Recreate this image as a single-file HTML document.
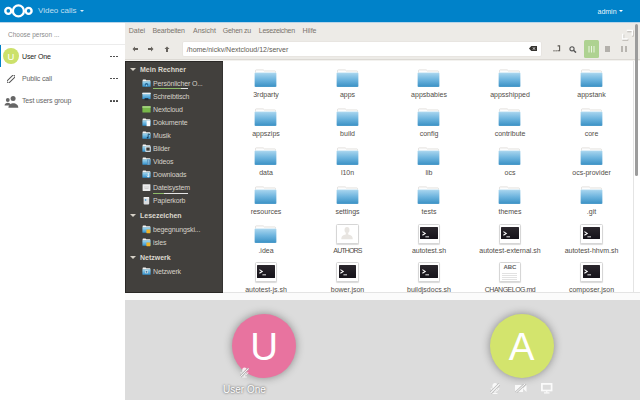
<!DOCTYPE html>
<html><head><meta charset="utf-8">
<style>
*{margin:0;padding:0;box-sizing:border-box}
html,body{width:640px;height:400px;overflow:hidden;background:#fff;font-family:"Liberation Sans",sans-serif}
div,span,svg{position:absolute}
.t{white-space:nowrap}
#hdr{z-index:5;left:0;top:0;width:640px;height:22px;background:#0082c9;border-bottom:1px solid #b8d4e8;height:23px}
.caret{width:0;height:0;border-left:2px solid transparent;border-right:2px solid transparent;border-top:2.5px solid #fff}
#left{left:0;top:21px;width:125px;height:379px;background:#fff}
.nm{left:22px;font-size:7px;color:#555;white-space:nowrap;letter-spacing:-0.15px}
.dots{left:110px;width:8px;height:2px}
.dots i{position:absolute;top:.2px;width:1.7px;height:1.7px;background:#3a3a3a;border-radius:.85px}
#win{left:125px;top:23px;width:515px;height:277px;background:#edebe7}
.menu{top:27px;font-size:7px;color:#7a746d;white-space:nowrap}
#path{left:182.5px;top:41.8px;width:358.5px;height:14px;background:#fff;border-radius:1px;box-shadow:0 0 0 .5px #e3e0db}
#sb{left:125px;top:61px;width:98px;height:232px;background:#42403d;box-shadow:inset 1px 1px 0 #2a2826,inset 0 -1px 0 #2a2826,inset -1px 0 0 #353331}
.sh{left:15px;font-size:7px;font-weight:bold;color:#dcd8ce;white-space:nowrap}
.sh .tri{left:-10.5px;top:2.5px;width:0;height:0;border-left:3px solid transparent;border-right:3px solid transparent;border-top:3.5px solid #d6d1c8}
.si{left:28px;font-size:7px;color:#d6d2c9;white-space:nowrap;letter-spacing:-0.15px}
.si i{position:absolute;left:-11px;top:0px;width:8px;height:7px;background:linear-gradient(180deg,#f2f2f2 0 2px,#3f8fc4 2px,#6fb2de 100%);border-radius:1px}
.ic-desk i{background:linear-gradient(180deg,#f0f0f0 0 1.5px,#6aa8d6 1.5px,#8cc0e6 5px,#223 5px)}
.ic-nc i{background:linear-gradient(180deg,#e8f2e0 0 1.5px,#8dc05a 1.5px,#6ea945 100%)}
.ic-drive i{background:linear-gradient(180deg,#f4f4f4,#cfcfcf)}
.ic-pic i{background:linear-gradient(180deg,#f2f2f2 0 2px,#3f8fc4 2px,#6fb2de 100%);box-shadow:inset -3px -2px 0 #333}
.ic-trash i{left:-10px;width:6px;background:linear-gradient(90deg,#c8ccd0,#f0f0f0,#b8bcc0)}
.ic-bm i{background:linear-gradient(180deg,#f2f2f2 0 2px,#3f8fc4 2px,#6fb2de 100%)}
.ic-bm i::after{content:"";position:absolute;left:4.5px;top:3.5px;width:4px;height:4px;background:#f0b429;border-radius:.5px}
.ic-net i{background:linear-gradient(180deg,#f2f2f2 0 2px,#3f8fc4 2px,#6fb2de 100%)}
.ul{left:28px;width:35px;height:1px;background:linear-gradient(90deg,#8dbb68 80%,#e6e6e6 80%)}
#view{left:223px;top:61px;width:410px;height:231px;background:#fff}
#vsep{left:125px;top:59px;width:515px;height:2px;background:#f3f2ef;border-top:1px solid #dcd9d4}
#scrollline{left:633px;top:61px;width:1px;height:231px;background:#e4e4e4}
#scrollbg{left:634px;top:61px;width:6px;height:231px;background:#fff}
#thumb{left:635px;top:24px;width:3px;height:152px;background:#9c9c9c;border-radius:1.5px}
#wbot{left:223px;top:292px;width:417px;height:8px;background:#fbfbfb;border-top:1px solid #e4e4e4}
#wbot2{left:125px;top:293px;width:98px;height:7px;background:#fbfbfb}
#grey{left:125px;top:300px;width:515px;height:100px;background:#dcdcdc}
.fold{width:23px;height:19px}
.fold i{position:absolute;left:1px;top:0;width:21px;height:5px;background:#fbfbfb;border-top:1px solid #d6d3ce}
.fold b{position:absolute;left:0;top:3px;width:23px;height:15px;background:linear-gradient(180deg,#c2e0f2 0,#8cc4e6 8%,#5aa7d6 55%,#3a8cc0 100%);border-radius:1px 1px 1px 1px;box-shadow:0 .5px 0 #2f7db0}
.doc{width:22.5px;height:20px;background:#fff;border:1px solid #d6d6d6;border-radius:1.5px;box-shadow:0 1px 1px rgba(0,0,0,.15)}
.term{left:1.5px;top:2.2px;width:17.8px;height:12.3px;background:linear-gradient(180deg,#2a262c,#15131a);border-radius:.5px}
.term svg{left:1.6px;top:4.2px}
.pers{left:1px;top:1px;width:18.5px;height:16px;background:#fff}
.pers svg{left:3px;top:0}
.txt{left:0;top:1px;width:20.5px;font-size:6px;color:#666;text-align:center;font-weight:bold}
.ln{left:2.5px;top:9.5px;width:15px;height:8px;background:repeating-linear-gradient(180deg,#e2e2e2 0 1px,transparent 1px 2px)}
.lbl{width:90px;text-align:center;font-size:7px;color:#514d48;white-space:nowrap}
.av{border-radius:50%;color:#fff;text-align:center}
</style></head><body>
<svg width="0" height="0" style="left:0;top:0"><defs>
<linearGradient id="fg" x1="0" y1="0" x2="0" y2="1"><stop offset="0" stop-color="#b4dcf1"/><stop offset=".1" stop-color="#9fd0ec"/><stop offset=".5" stop-color="#6db4de"/><stop offset="1" stop-color="#3990c4"/></linearGradient>
<linearGradient id="sbg" x1="0" y1="0" x2="0" y2="1"><stop offset="0" stop-color="#a9dcf2"/><stop offset="1" stop-color="#2f8fcc"/></linearGradient>
<g id="si-fold"><path d="M0.6 2.5 V1.2 Q0.6 .6 1.2 .6 H3.6 L4.3 1.3 H7.8 Q8.4 1.3 8.4 1.9 V2.5 Z" fill="#f4f4f4"/><rect x=".4" y="2.2" width="8.2" height="5.6" rx=".6" fill="url(#sbg)"/></g>
<g id="si-home"><use href="#si-fold"/><circle cx="4.5" cy="5.5" r="1.6" fill="#1e5f8e"/><rect x="3.8" y="5.6" width="1.4" height="1.6" fill="#8fcbe9"/></g>
<g id="si-desk"><rect x=".4" y=".8" width="8.2" height="6.2" rx=".5" fill="url(#sbg)"/><rect x=".4" y=".8" width="8.2" height="1.3" fill="#f0f0f0"/><rect x="2.6" y="6.2" width="3.8" height="2" fill="#1d2a36"/></g>
<g id="si-nc"><rect x=".4" y="1.2" width="8.2" height="6.4" rx=".5" fill="#78b84a"/><rect x=".4" y="1.2" width="8.2" height="1.6" fill="#a8d884"/></g>
<g id="si-docs"><use href="#si-fold"/><path d="M4.6 2.6 H8.2 V8.2 H4.6 Z" fill="#fafafa"/></g>
<g id="si-music"><use href="#si-fold"/><path d="M6.2 3 V6.4 M6.2 3 L8 3.6" stroke="#173a55" stroke-width=".8" fill="none"/><circle cx="5.6" cy="6.6" r=".9" fill="#173a55"/></g>
<g id="si-pic"><use href="#si-fold"/><rect x="3.4" y="2.6" width="5.2" height="5.2" fill="#eeeeee"/><rect x="4.3" y="3.5" width="3.4" height="3.2" fill="#3a3a36"/></g>
<g id="si-vid"><use href="#si-fold"/><rect x="5" y="2.6" width="3" height="5.2" fill="#3a7fb0"/><path d="M5.5 3.4 H7.5 M5.5 4.6 H7.5 M5.5 5.8 H7.5 M5.5 7 H7.5" stroke="#c8e6f6" stroke-width=".6"/></g>
<g id="si-dl"><use href="#si-fold"/><path d="M6.3 3 V7 M5 5.6 L6.3 7.2 L7.6 5.6" stroke="#f4f4f4" stroke-width=".9" fill="none"/></g>
<g id="si-drive"><rect x=".6" y="1.2" width="7.8" height="6.8" rx=".4" fill="#ececec"/><path d="M2 4 H7 M2.5 5.5 H6.5" stroke="#bdbdbd" stroke-width=".6"/></g>
<g id="si-trash"><rect x="1.6" y="1" width="5.6" height="7.6" rx="1" fill="#d9dcdf"/><rect x="1.6" y="1" width="5.6" height="1.5" rx=".6" fill="#f2f2f2"/><circle cx="3.6" cy="4" r=".8" fill="#2a8bd0"/></g>
<g id="si-bm"><use href="#si-fold"/><rect x="4.4" y="4.4" width="4" height="3.8" rx=".4" fill="#f1b42b"/></g>
<g id="si-net"><use href="#si-fold"/><rect x="3" y="3.6" width="3" height="2.6" fill="#f4f4f4"/><rect x="3.6" y="4.2" width="1.8" height="1.4" fill="#1e5f8e"/></g>
<g id="micoff"><rect x="2.5" y="0" width="5" height="7.4" rx="2.5" fill="#fff"/><path d="M1.1 5 C1.1 9.2 8.9 9.2 8.9 5" fill="none" stroke="#fff" stroke-width="1"/><rect x="4.5" y="8.5" width="1" height="1.6" fill="#fff"/><rect x="2.5" y="10" width="5" height="1" fill="#fff"/><path d="M0.5 10 L9.5 1" stroke="#b8b8b8" stroke-width="2.8"/><path d="M0.5 10 L9.5 1" stroke="#fff" stroke-width="1.1"/></g>
<g id="folder"><path d="M1.6 5 V1.2 Q1.6 0.5 2.3 0.5 H9.6 L10.8 1.6 H21.6 Q22.4 1.6 22.4 2.3 V5 Z" fill="#fdfdfd"/><path d="M1.6 3.5 V1.2 Q1.6 0.5 2.3 0.5 H9.6 L10.8 1.6 H21.6 Q22.4 1.6 22.4 2.3 V3.5" fill="none" stroke="#d2cec8" stroke-width=".6"/><rect x="0.6" y="3.2" width="22.8" height="15.2" rx="1" fill="url(#fg)"/><rect x="0.6" y="3.2" width="22.8" height="15.2" rx="1" fill="none" stroke="#fff" stroke-opacity=".35" stroke-width=".5"/></g>
</defs></svg>
<div id="hdr">
  <svg style="left:0;top:0" width="40" height="21" viewBox="0 0 40 21">
    <circle cx="8.3" cy="10.9" r="3.0" fill="none" stroke="#fff" stroke-width="2.4"/>
    <circle cx="18.4" cy="10.9" r="5.5" fill="none" stroke="#fff" stroke-width="2.3"/>
    <circle cx="28.6" cy="10.9" r="3.0" fill="none" stroke="#fff" stroke-width="2.4"/>
  </svg>
  <div class="t" style="left:38px;top:6px;color:rgba(255,255,255,.75);font-size:8px">Video calls</div>
  <div class="caret" style="left:80.4px;top:10.4px;opacity:.85"></div>
  <div class="t" style="left:597.5px;top:7.5px;color:rgba(255,255,255,.95);font-size:7px">admin</div>
  <div class="caret" style="left:619.3px;top:10.4px"></div>
</div>
<div id="left">
  <div class="t" style="left:8px;top:9.8px;color:#8a8a8a;font-size:6.5px">Choose person ...</div>
  <div style="left:0;top:23px;width:125px;height:1px;background:#ececec"></div>
  <div style="left:0;top:24.3px;width:1.3px;height:21.8px;background:#0082c9"></div>
  <div class="av" style="left:3px;top:27.4px;width:15.8px;height:15.8px;background:#cce16b;font-size:9.5px;line-height:17.6px">U</div>
  <div class="nm" style="top:32px;color:#222">User One</div>
  <div class="dots" style="top:34.6px"><i style="left:0"></i><i style="left:3px"></i><i style="left:6px"></i></div>
  <svg style="left:7px;top:53.5px" width="8" height="8" viewBox="0 0 8 8"><rect x="-1.2" y="2.6" width="10.4" height="2.8" rx="1.4" transform="rotate(-45 4 4)" fill="none" stroke="#555" stroke-width="1"/></svg>
  <div class="nm" style="top:53.5px;color:#666">Public call</div>
  <div class="dots" style="top:56.6px"><i style="left:0"></i><i style="left:3px"></i><i style="left:6px"></i></div>
  <svg style="left:3.5px;top:73.5px" width="15" height="13" viewBox="0 0 15 13"><circle cx="3.8" cy="5" r="1.9" fill="#666"/><path d="M0.6 10.5 C0.6 6.8 7 6.8 7 10.5 Z" fill="#666"/><circle cx="9.1" cy="3.4" r="2.5" fill="#666"/><path d="M4.4 12.8 C4.4 6.8 14.3 6.8 14.3 12.8 Z" fill="#666"/></svg>
  <div class="nm" style="top:75.6px;color:#666">Test users group</div>
  <div class="dots" style="top:78.7px"><i style="left:0"></i><i style="left:3px"></i><i style="left:6px"></i></div>
</div>
<div id="win"></div>
<div class="menu" style="left:128.8px">Datei</div>
<div class="menu" style="left:152.5px;letter-spacing:-0.15px">Bearbeiten</div>
<div class="menu" style="left:193px">Ansicht</div>
<div class="menu" style="left:222.8px;letter-spacing:-0.3px">Gehen zu</div>
<div class="menu" style="left:258.8px;letter-spacing:-0.3px">Lesezeichen</div>
<div class="menu" style="left:302.5px">Hilfe</div>
<svg style="left:132px;top:46px" width="40" height="7" viewBox="0 0 40 7">
  <path d="M0.5 3 L3 0.5 L3 2 L6 2 L6 4 L3 4 L3 5.5 Z" fill="#66625d"/>
  <path d="M21.5 3 L19 0.5 L19 2 L16 2 L16 4 L19 4 L19 5.5 Z" fill="#66625d"/>
  <path d="M35 0.5 L37.5 3 L36 3 L36 6 L34 6 L34 3 L32.5 3 Z" fill="#66625d"/>
</svg>
<div id="path"><span class="t" style="left:4.3px;top:4px;font-size:7px;color:#625d56;letter-spacing:0px">/home/nickv/Nextcloud/12/server</span>
  <svg style="left:346.5px;top:4.3px" width="8" height="5" viewBox="0 0 8 5"><path d="M0 2.5 L2.3 0 L8 0 L8 5 L2.3 5 Z" fill="#353330"/><path d="M3.9 1.3 L6 3.7 M6 1.3 L3.9 3.7" stroke="#eee" stroke-width=".8"/></svg>
</div>
<svg style="left:553px;top:45px" width="8" height="7" viewBox="0 0 8 7"><path d="M4.6 .9 H6.6 V5.8 H4.4" fill="none" stroke="#5e5a55" stroke-width="1.1"/><rect x="0.4" y="5.2" width="1.2" height="1.2" fill="#5e5a55"/><rect x="2.5" y="5.2" width="1.2" height="1.2" fill="#5e5a55"/></svg>
<svg style="left:569px;top:46px" width="8" height="7" viewBox="0 0 8 7"><circle cx="3" cy="2.8" r="2.1" fill="none" stroke="#555" stroke-width="1.1"/><path d="M4.5 4.3 L7 6.6" stroke="#555" stroke-width="1.4"/></svg>
<div style="left:583.8px;top:39.5px;width:15.7px;height:18.5px;background:#aed291;border-radius:1.5px"></div>
<svg style="left:588px;top:46px" width="8" height="7" viewBox="0 0 8 7"><rect x="0.5" y="0" width="1" height="6.5" fill="#eaf5df"/><rect x="3" y="0" width="1" height="6.5" fill="#eaf5df"/><rect x="5.5" y="0" width="1" height="6.5" fill="#eaf5df"/></svg>
<div style="left:605px;top:46px;width:5px;height:6px;background:#b3b0ab"></div>
<div style="left:620.5px;top:46px;width:2px;height:6px;background:#b8b5b0"></div>
<div style="left:624.5px;top:46px;width:2px;height:6px;background:#b8b5b0"></div>
<svg style="left:619px;top:28px" width="16" height="14" viewBox="619 28 16 14"><g fill="none" stroke="#b9b5af" stroke-width="1.8" transform="translate(.5 .7)"><path d="M626.75 30.6 H632.4 V35.75"/><path d="M622.8 33.75 V39.1 H627.75"/></g><g fill="none" stroke="#fff" stroke-width="1.5"><path d="M626.75 30.6 H632.4 V35.75"/><path d="M622.8 33.75 V39.1 H627.75"/></g></svg>
<div id="sb">
<div class="sh" style="top:4.8px"><span class="tri"></span>Mein Rechner</div>
<svg style="left:16.5px;top:17.699999999999996px" width="9" height="9" viewBox="0 0 9 9"><use href="#si-home"/></svg>
<div class="si" style="top:18.999999999999996px">Persönlicher O...</div>
<div class="ul" style="top:27.299999999999997px;background:linear-gradient(90deg,#8dbb68 80%,#e6e6e6 80%)"></div>
<svg style="left:16.5px;top:30.999999999999993px" width="9" height="9" viewBox="0 0 9 9"><use href="#si-desk"/></svg>
<div class="si" style="top:32.3px">Schreibtisch</div>
<svg style="left:16.5px;top:43.99999999999999px" width="9" height="9" viewBox="0 0 9 9"><use href="#si-nc"/></svg>
<div class="si" style="top:45.3px">Nextcloud</div>
<svg style="left:16.5px;top:56.99999999999999px" width="9" height="9" viewBox="0 0 9 9"><use href="#si-docs"/></svg>
<div class="si" style="top:58.3px">Dokumente</div>
<svg style="left:16.5px;top:70.0px" width="9" height="9" viewBox="0 0 9 9"><use href="#si-music"/></svg>
<div class="si" style="top:71.3px">Musik</div>
<svg style="left:16.5px;top:83.0px" width="9" height="9" viewBox="0 0 9 9"><use href="#si-pic"/></svg>
<div class="si" style="top:84.3px">Bilder</div>
<svg style="left:16.5px;top:96.0px" width="9" height="9" viewBox="0 0 9 9"><use href="#si-vid"/></svg>
<div class="si" style="top:97.3px">Videos</div>
<svg style="left:16.5px;top:109.0px" width="9" height="9" viewBox="0 0 9 9"><use href="#si-dl"/></svg>
<div class="si" style="top:110.3px">Downloads</div>
<svg style="left:16.5px;top:122.0px" width="9" height="9" viewBox="0 0 9 9"><use href="#si-drive"/></svg>
<div class="si" style="top:123.3px">Dateisystem</div>
<div class="ul" style="top:131.6px;background:linear-gradient(90deg,#8dbb68 32%,#e6e6e6 32%)"></div>
<svg style="left:16.5px;top:134.8px" width="9" height="9" viewBox="0 0 9 9"><use href="#si-trash"/></svg>
<div class="si" style="top:136.1px">Papierkorb</div>
<div class="sh" style="top:150.8px"><span class="tri"></span>Lesezeichen</div>
<svg style="left:16.5px;top:163.8px" width="9" height="9" viewBox="0 0 9 9"><use href="#si-bm"/></svg>
<div class="si" style="top:165.1px">begegnungski...</div>
<svg style="left:16.5px;top:176.9px" width="9" height="9" viewBox="0 0 9 9"><use href="#si-bm"/></svg>
<div class="si" style="top:178.2px">isles</div>
<div class="sh" style="top:192.8px"><span class="tri"></span>Netzwerk</div>
<svg style="left:16.5px;top:206.00000000000003px" width="9" height="9" viewBox="0 0 9 9"><use href="#si-net"/></svg>
<div class="si" style="top:207.3px">Netzwerk</div>
</div>
<div id="vsep"></div>
<div id="view"></div>
<div id="scrollline"></div>
<div id="scrollbg"></div>
<div id="thumb"></div>
<div id="wbot"></div><div id="wbot2"></div>
<svg class="fold" style="left:254px;top:68.8px" width="24" height="19" viewBox="0 0 24 19"><use href="#folder"/></svg>
<div class="lbl" style="left:221px;top:91px;letter-spacing:0px">3rdparty</div>
<svg class="fold" style="left:335.5px;top:68.8px" width="24" height="19" viewBox="0 0 24 19"><use href="#folder"/></svg>
<div class="lbl" style="left:302.5px;top:91px;letter-spacing:0px">apps</div>
<svg class="fold" style="left:417px;top:68.8px" width="24" height="19" viewBox="0 0 24 19"><use href="#folder"/></svg>
<div class="lbl" style="left:384px;top:91px;letter-spacing:0px">appsbabies</div>
<svg class="fold" style="left:498px;top:68.8px" width="24" height="19" viewBox="0 0 24 19"><use href="#folder"/></svg>
<div class="lbl" style="left:465px;top:91px;letter-spacing:0px">appsshipped</div>
<svg class="fold" style="left:579.5px;top:68.8px" width="24" height="19" viewBox="0 0 24 19"><use href="#folder"/></svg>
<div class="lbl" style="left:546.5px;top:91px;letter-spacing:0px">appstank</div>
<svg class="fold" style="left:254px;top:107.8px" width="24" height="19" viewBox="0 0 24 19"><use href="#folder"/></svg>
<div class="lbl" style="left:221px;top:130px;letter-spacing:0px">appszips</div>
<svg class="fold" style="left:335.5px;top:107.8px" width="24" height="19" viewBox="0 0 24 19"><use href="#folder"/></svg>
<div class="lbl" style="left:302.5px;top:130px;letter-spacing:0px">build</div>
<svg class="fold" style="left:417px;top:107.8px" width="24" height="19" viewBox="0 0 24 19"><use href="#folder"/></svg>
<div class="lbl" style="left:384px;top:130px;letter-spacing:0px">config</div>
<svg class="fold" style="left:498px;top:107.8px" width="24" height="19" viewBox="0 0 24 19"><use href="#folder"/></svg>
<div class="lbl" style="left:465px;top:130px;letter-spacing:0px">contribute</div>
<svg class="fold" style="left:579.5px;top:107.8px" width="24" height="19" viewBox="0 0 24 19"><use href="#folder"/></svg>
<div class="lbl" style="left:546.5px;top:130px;letter-spacing:0px">core</div>
<svg class="fold" style="left:254px;top:146.8px" width="24" height="19" viewBox="0 0 24 19"><use href="#folder"/></svg>
<div class="lbl" style="left:221px;top:169px;letter-spacing:0px">data</div>
<svg class="fold" style="left:335.5px;top:146.8px" width="24" height="19" viewBox="0 0 24 19"><use href="#folder"/></svg>
<div class="lbl" style="left:302.5px;top:169px;letter-spacing:0px">l10n</div>
<svg class="fold" style="left:417px;top:146.8px" width="24" height="19" viewBox="0 0 24 19"><use href="#folder"/></svg>
<div class="lbl" style="left:384px;top:169px;letter-spacing:0px">lib</div>
<svg class="fold" style="left:498px;top:146.8px" width="24" height="19" viewBox="0 0 24 19"><use href="#folder"/></svg>
<div class="lbl" style="left:465px;top:169px;letter-spacing:0px">ocs</div>
<svg class="fold" style="left:579.5px;top:146.8px" width="24" height="19" viewBox="0 0 24 19"><use href="#folder"/></svg>
<div class="lbl" style="left:546.5px;top:169px;letter-spacing:0px">ocs-provider</div>
<svg class="fold" style="left:254px;top:185.8px" width="24" height="19" viewBox="0 0 24 19"><use href="#folder"/></svg>
<div class="lbl" style="left:221px;top:208px;letter-spacing:0px">resources</div>
<svg class="fold" style="left:335.5px;top:185.8px" width="24" height="19" viewBox="0 0 24 19"><use href="#folder"/></svg>
<div class="lbl" style="left:302.5px;top:208px;letter-spacing:0px">settings</div>
<svg class="fold" style="left:417px;top:185.8px" width="24" height="19" viewBox="0 0 24 19"><use href="#folder"/></svg>
<div class="lbl" style="left:384px;top:208px;letter-spacing:0px">tests</div>
<svg class="fold" style="left:498px;top:185.8px" width="24" height="19" viewBox="0 0 24 19"><use href="#folder"/></svg>
<div class="lbl" style="left:465px;top:208px;letter-spacing:0px">themes</div>
<svg class="fold" style="left:579.5px;top:185.8px" width="24" height="19" viewBox="0 0 24 19"><use href="#folder"/></svg>
<div class="lbl" style="left:546.5px;top:208px;letter-spacing:0px">.git</div>
<svg class="fold" style="left:254px;top:224.8px" width="24" height="19" viewBox="0 0 24 19"><use href="#folder"/></svg>
<div class="lbl" style="left:221px;top:247px;letter-spacing:0px">.idea</div>
<div class="doc dp" style="left:336.2px;top:223.6px"><div class="pers"><svg width="12" height="14" viewBox="0 0 12 14"><ellipse cx="6" cy="4" rx="2.5" ry="3" fill="#e8e5e1"/><path d="M0.3 13.2 C0.3 9.6 3 8.6 6 8.6 C9 8.6 11.7 9.6 11.7 13.2 Z" fill="#e8e5e1"/><rect x="4.8" y="6.5" width="2.4" height="2.5" fill="#e8e5e1"/></svg></div></div>
<div class="lbl" style="left:302.5px;top:247px;letter-spacing:-0.85px">AUTHORS</div>
<div class="doc" style="left:417.7px;top:223.6px"><div class="term"><svg width="9" height="7" viewBox="0 0 9 7"><path d="M0.4 0.6 L3.2 2.4 L0.4 4.2" fill="none" stroke="#fff" stroke-width="1.1"/><rect x="3.4" y="5.4" width="3.6" height=".9" fill="#fff"/></svg></div></div>
<div class="lbl" style="left:384px;top:247px;letter-spacing:0px">autotest.sh</div>
<div class="doc" style="left:498.7px;top:223.6px"><div class="term"><svg width="9" height="7" viewBox="0 0 9 7"><path d="M0.4 0.6 L3.2 2.4 L0.4 4.2" fill="none" stroke="#fff" stroke-width="1.1"/><rect x="3.4" y="5.4" width="3.6" height=".9" fill="#fff"/></svg></div></div>
<div class="lbl" style="left:465px;top:247px;letter-spacing:0px">autotest-external.sh</div>
<div class="doc" style="left:580.2px;top:223.6px"><div class="term"><svg width="9" height="7" viewBox="0 0 9 7"><path d="M0.4 0.6 L3.2 2.4 L0.4 4.2" fill="none" stroke="#fff" stroke-width="1.1"/><rect x="3.4" y="5.4" width="3.6" height=".9" fill="#fff"/></svg></div></div>
<div class="lbl" style="left:546.5px;top:247px;letter-spacing:0px">autotest-hhvm.sh</div>
<div class="doc" style="left:254.7px;top:262.1px"><div class="term"><svg width="9" height="7" viewBox="0 0 9 7"><path d="M0.4 0.6 L3.2 2.4 L0.4 4.2" fill="none" stroke="#fff" stroke-width="1.1"/><rect x="3.4" y="5.4" width="3.6" height=".9" fill="#fff"/></svg></div></div>
<div class="lbl" style="left:221px;top:286px;letter-spacing:0px">autotest-js.sh</div>
<div class="doc" style="left:336.2px;top:262.1px"><div class="term"><svg width="9" height="7" viewBox="0 0 9 7"><path d="M0.4 0.6 L3.2 2.4 L0.4 4.2" fill="none" stroke="#fff" stroke-width="1.1"/><rect x="3.4" y="5.4" width="3.6" height=".9" fill="#fff"/></svg></div></div>
<div class="lbl" style="left:302.5px;top:286px;letter-spacing:0px">bower.json</div>
<div class="doc" style="left:417.7px;top:262.1px"><div class="term"><svg width="9" height="7" viewBox="0 0 9 7"><path d="M0.4 0.6 L3.2 2.4 L0.4 4.2" fill="none" stroke="#fff" stroke-width="1.1"/><rect x="3.4" y="5.4" width="3.6" height=".9" fill="#fff"/></svg></div></div>
<div class="lbl" style="left:384px;top:286px;letter-spacing:0px">buildjsdocs.sh</div>
<div class="doc" style="left:498.7px;top:262.1px"><div class="txt">ABC</div><div class="ln"></div></div>
<div class="lbl" style="left:465px;top:286px;letter-spacing:-0.5px">CHANGELOG.md</div>
<div class="doc" style="left:580.2px;top:262.1px"><div class="term"><svg width="9" height="7" viewBox="0 0 9 7"><path d="M0.4 0.6 L3.2 2.4 L0.4 4.2" fill="none" stroke="#fff" stroke-width="1.1"/><rect x="3.4" y="5.4" width="3.6" height=".9" fill="#fff"/></svg></div></div>
<div class="lbl" style="left:546.5px;top:286px;letter-spacing:0px">composer.json</div>
<div id="grey"></div>
<div class="av" style="left:232px;top:314px;width:64.2px;height:64px;background:#e8739f;font-size:38.5px;line-height:65.5px;box-shadow:0 0 8px rgba(0,0,0,.38)">U</div>
<div class="av" style="left:489.5px;top:313.8px;width:64.2px;height:64.2px;background:#d3e46d;font-size:38.5px;line-height:65.5px;box-shadow:0 0 8px rgba(0,0,0,.38)">A</div>
<svg style="left:240px;top:366.8px;opacity:.85" width="9" height="11" viewBox="0 0 10 11"><use href="#micoff"/></svg>
<div class="t" style="left:223px;top:383.5px;font-size:10px;color:#fff;text-shadow:0 0 2px rgba(0,0,0,.5),0 0 3px rgba(0,0,0,.3)">User One</div>
<svg style="left:490px;top:382.5px;opacity:.85" width="10" height="11" viewBox="0 0 10 11"><use href="#micoff"/></svg>
<svg style="left:515px;top:383.5px;opacity:.85" width="12" height="9" viewBox="0 0 12 9"><path d="M0 1 H8 V8 H0 Z M8 4.5 L11.5 1 V8 Z" fill="#fff"/><path d="M0.5 8.8 L10.5 -0.5" stroke="#bdbdbd" stroke-width="2.6"/><path d="M0.5 8.8 L10.5 -0.5" stroke="#fff" stroke-width="1"/></svg>
<svg style="left:541px;top:382.5px;opacity:.9" width="11.5" height="11" viewBox="0 0 11.5 11"><rect x=".9" y=".9" width="9.7" height="6.6" fill="none" stroke="#fff" stroke-width="1.7"/><rect x="5.1" y="7.5" width="1.3" height="2" fill="#fff"/><rect x="3" y="9.3" width="5.5" height="1.2" fill="#fff"/></svg>
</body></html>
